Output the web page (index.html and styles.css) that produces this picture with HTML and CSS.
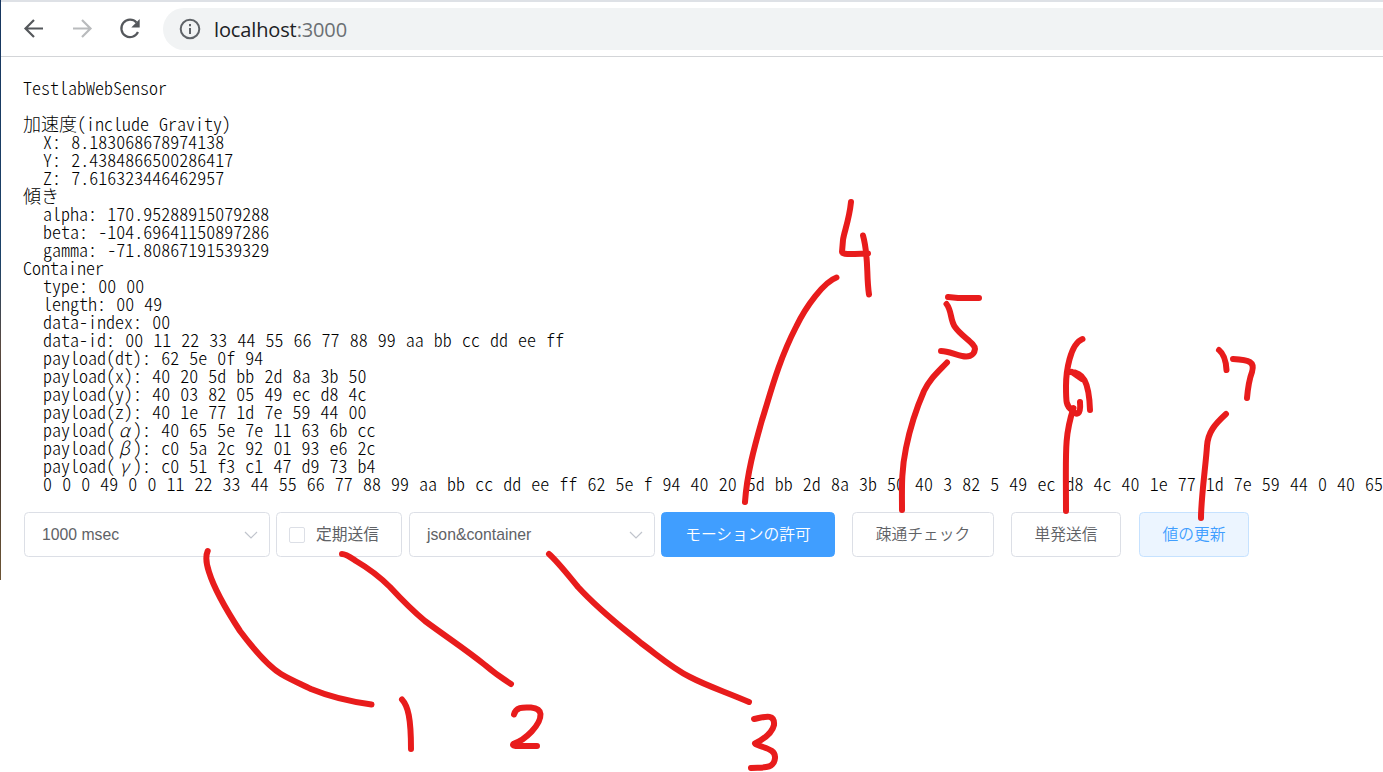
FILE: index.html
```html
<!DOCTYPE html>
<html lang="ja">
<head>
<meta charset="utf-8">
<title>TestlabWebSensor</title>
<link rel="stylesheet" href="styles.css">
</head>
<body>
<div class="window">
<header class="toolbar">
  <svg class="nav-icon" viewBox="0 0 24 24"><path d="M21 11.500H4M12 3 3.500 11.500l8.500 8.500" /></svg>
  <svg class="nav-icon nav-disabled" viewBox="0 0 24 24"><path d="M3 11.500h17M12 3 20.500 11.500 12 20"/></svg>
  <svg class="nav-icon" viewBox="0 0 24 24"><path d="M20 15A8.700 8.700 0 1 1 18.500 5.500"/><path class="solid" d="M21.700 2v8.400h-8.400z"/></svg>
  <div class="address">
    <svg class="info" viewBox="0 0 22 22"><circle cx="11" cy="11" r="9.300"/><path d="M11 10v6M11 6v2.200"/></svg>
    <span class="url">localhost<span class="port">:3000</span></span>
  </div>
</header>
<main class="content">
<p class="title">TestlabWebSensor</p>
<pre class="readout">加速度(include Gravity)
  X: 8.183068678974138
  Y: 2.4384866500286417
  Z: 7.616323446462957
傾き
  alpha: 170.95288915079288
  beta: -104.69641150897286
  gamma: -71.80867191539329
Container
  type: 00 00
  length: 00 49
  data-index: 00
  data-id: 00 11 22 33 44 55 66 77 88 99 aa bb cc dd ee ff
  payload(dt): 62 5e 0f 94
  payload(x): 40 20 5d bb 2d 8a 3b 50
  payload(y): 40 03 82 05 49 ec d8 4c
  payload(z): 40 1e 77 1d 7e 59 44 00
  payload(<span class="greek">α</span>): 40 65 5e 7e 11 63 6b cc
  payload(<span class="greek">β</span>): c0 5a 2c 92 01 93 e6 2c
  payload(<span class="greek">γ</span>): c0 51 f3 c1 47 d9 73 b4
  0 0 0 49 0 0 11 22 33 44 55 66 77 88 99 aa bb cc dd ee ff 62 5e f 94 40 20 5d bb 2d 8a 3b 50 40 3 82 5 49 ec d8 4c 40 1e 77 1d 7e 59 44 0 40 65</pre>
<div class="controls">
  <div class="control select"><span>1000 msec</span><svg class="chevron" viewBox="0 0 14 8"><path d="M1 1l6 6 6-6"/></svg></div>
  <label class="control check"><span class="box"></span><span>定期送信</span></label>
  <div class="control select"><span>json&amp;container</span><svg class="chevron" viewBox="0 0 14 8"><path d="M1 1l6 6 6-6"/></svg></div>
  <button class="control button primary">モーションの許可</button>
  <button class="control button wide">疎通チェック</button>
  <button class="control button">単発送信</button>
  <button class="control button plain">値の更新</button>
</div>
</main>
<div class="edge"></div>
<svg class="notes" viewBox="0 0 1383 772">
  <path d="M207.700 551C205 557 206 563 209 572C214 588 225 608 240 631C252 647 268 666 281 674C291 680 301 684 311 689C328 696 346 701 371.500 704.500"/>
  <path d="M402 699.500C408 706 411 718 411 749"/>
  <path d="M342 554C346 554 350 557 356 561C368 568 379 576 390 587C402 600 413 611 425 621C448 638 465 649 485 665C492 671 500 677 511 684"/>
  <path d="M514 714.500C516 706 525 707.500 531 707.500C537 708 540 710 540.500 714C541 725 525 740 514 743.500C509 747 522 746 537 746"/>
  <path d="M549 554C558 562 568 575 578 587C600 611 619 625 641 643C660 657 672 668 690 677C707 686 726 692 749 702"/>
  <path d="M754 719C764 717 775 713 774 725C772 734 762 740 755 743.500C761 748 776 748 775 758C774 770 761 767 751 768"/>
  <path d="M851 202C849 221 844 232 843 240L842 252C842 255 853 254 868 253.500M863 235.500C869 257 866 275 869 294.500"/>
  <path d="M836.500 277.500C824 282 806 306 796 327C778 362 770 395 762 420C754 448 747 474 745 502"/>
  <path d="M948 297L958 298L979 298M946.500 304C952 311 950 320 955 327C962 337 975 343 975 349C974 357 967 357 962 356C955 355 949 351 941 351"/>
  <path d="M947 362.500C936 374 930 379 924 391C917 407 910 428 906 448C901 472 902 490 902 510"/>
  <path d="M1082.500 339C1070 344 1066 372 1066 386C1066 402 1066 406 1072 410C1077 416 1081 415 1080 402M1070 372C1083 372 1089 381 1090 410M1072 372L1082 379"/>
  <path d="M1073.500 408C1064 437 1066 452 1066 511"/>
  <path d="M1219 350C1224 354 1226 361 1226.500 370M1233 359C1250 360 1255 362 1252 372C1249 380 1248 387 1247 398"/>
  <path d="M1226 414C1215 424 1208 432 1207 446C1206 463 1201 498 1201 518"/>
</svg>
</div>
</body>
</html>
```
FILE: styles.css
```css
* { box-sizing: border-box; }
body { margin: 0; background: #fff; }
.window {
  position: relative;
  width: 1383px;
  height: 772px;
  overflow: hidden;
}
.toolbar {
  display: flex;
  align-items: center;
  height: 57px;
  padding-left: 22px;
  gap: 24px;
  border-top: 2px solid #dee1e6;
  border-bottom: 1px solid #d3d5d8;
}
.nav-icon {
  width: 24px;
  height: 24px;
  fill: none;
  stroke: #55585c;
  stroke-width: 2.2;
}
.nav-icon .solid { fill: #55585c; stroke: none; }
.nav-disabled { stroke: #b9bbbd; }
.address {
  display: flex;
  flex: 1;
  align-items: center;
  gap: 13px;
  height: 42px;
  margin-left: -3px;
  padding-left: 16px;
  border-radius: 21px 0 0 21px;
  background: #f1f3f4;
}
.info {
  width: 22px;
  height: 22px;
  fill: none;
  stroke: #5f6368;
  stroke-width: 2;
}
.url {
  padding-top: 1px;
  font: 20px/28px "Open Sans", "Noto Sans", sans-serif;
  letter-spacing: -0.13px;
  color: #202124;
}
.port { color: #6b6f73; }
.content { padding: 21px 0 0 23px; }
.title, .readout {
  margin: 0;
  font-family: "Noto Sans CJK JP", monospace;
  font-size: 18px;
  font-weight: 300;
  line-height: 18px;
  font-variant-ligatures: none;
  font-feature-settings: "hwid";
  word-spacing: 1.06px;
  color: #000;
  white-space: pre;
}
.readout { margin-top: 18px; }
.greek { display: inline-block; width: 18px; line-height: 17px; text-align: center; font-style: italic; }
.controls {
  display: flex;
  margin: 20px 0 0 1px;
  gap: 6px;
}
.control {
  display: flex;
  align-items: center;
  height: 45px;
  border: 1px solid #dcdfe6;
  border-radius: 4.5px;
  background: #fff;
  font: 15.75px "Liberation Sans", "Noto Sans CJK JP", sans-serif;
  color: #606266;
}
.select { justify-content: space-between; width: 246px; padding: 0 11px 0 17px; }
.chevron { width: 14px; height: 8px; fill: none; stroke: #c0c4cc; stroke-width: 1.2; }
.check { width: 126px; margin-right: 1px; padding: 0 0 2px 12px; gap: 11px; }
.box { width: 16px; height: 16px; margin-top: 2px; border: 1px solid #dcdfe6; border-radius: 2px; }
.button { justify-content: center; width: 110px; margin-right: 11px; padding: 0 0 2px; font-weight: 350; white-space: nowrap; }
.primary { width: 174px; border-color: #409eff; background: #409eff; color: #fff; }
.wide { width: 142px; }
.button.plain { margin-left: 1px; border-color: #c6e2ff; background: #ecf5ff; color: #409eff; }
.edge {
  position: absolute;
  top: 0;
  left: 0;
  width: 1px;
  height: 580px;
  background: linear-gradient(#17365f 0, #1c4268 45%, #5b4a40 60%, #3b302d 75%, #6d5535 100%);
}
.notes {
  position: absolute;
  inset: 0;
  width: 1383px;
  height: 772px;
  fill: none;
  stroke: #e81c1c;
  stroke-width: 6;
  stroke-linecap: round;
  stroke-linejoin: round;
}
```
